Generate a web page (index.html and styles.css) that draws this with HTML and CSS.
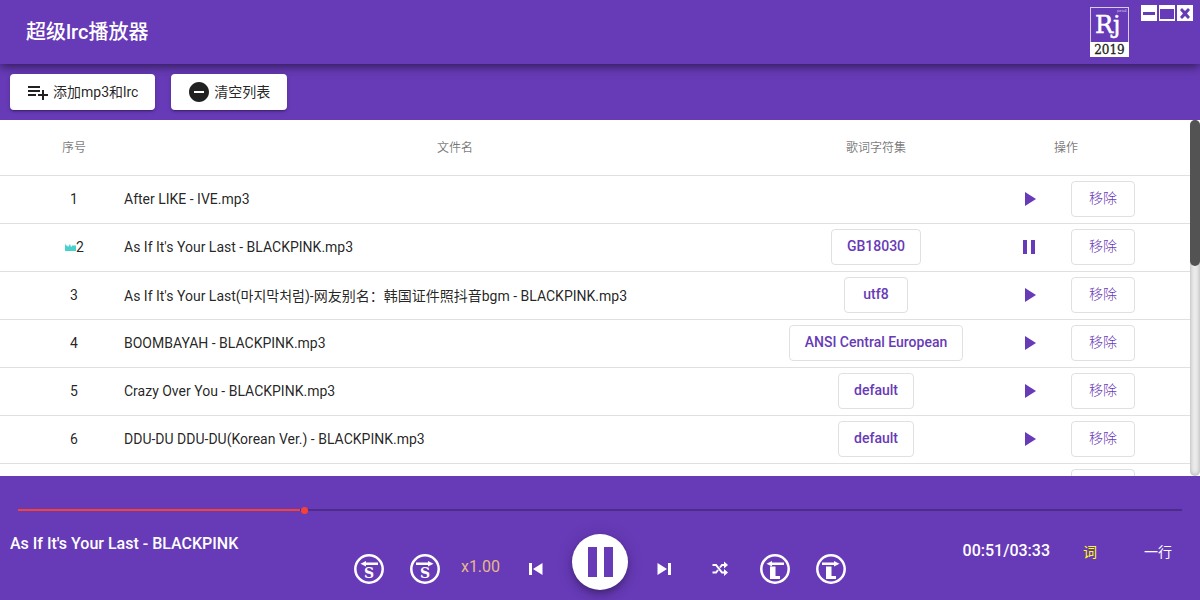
FILE: index.html
```html
<!DOCTYPE html>
<html lang="zh-CN">
<head>
<meta charset="utf-8">
<title>超级lrc播放器</title>
<link rel="stylesheet" href="styles.css">
</head>
<body>
<svg class="defs" aria-hidden="true">
  <symbol id="play" viewBox="0 0 24 24"><path d="M8 5v14l11-7z"/></symbol>
  <symbol id="pause" viewBox="0 0 24 24"><path d="M6 19h4V5H6v14zm8-14v14h4V5h-4z"/></symbol>
  <symbol id="arrow-left" viewBox="0 0 30 30"><path d="M6.500 9.700l5.500-2.700v1.500h12v2.400H12v1.500z"/></symbol>
  <symbol id="arrow-right" viewBox="0 0 30 30"><path d="M23.500 9.700L18 7v1.500H6v2.400h12v1.500z"/></symbol>
</svg>
<div class="app">
  <header class="header">
    <h1 class="title">超级lrc播放器</h1>
    <svg class="logo" viewBox="0 0 39 50" role="img" aria-label="Rj prod 2019">
      <rect class="logo-frame" x="0.5" y="0.5" width="38" height="49"/>
      <rect class="logo-base" x="0" y="35" width="39" height="15"/>
      <text class="logo-rj" x="5" y="26">Rj<tspan class="logo-prod" x="27" y="5">prod</tspan></text>
      <text class="logo-year" x="19.5" y="47" text-anchor="middle">2019</text>
    </svg>
    <div class="window-controls">
      <button class="window-button" aria-label="最小化"><svg viewBox="0 0 16 16"><path d="M2 7h12v3H2z"/></svg></button>
      <button class="window-button" aria-label="最大化"><svg viewBox="0 0 16 16"><path d="M1 4h14v10H1z"/></svg></button>
      <button class="window-button" aria-label="关闭"><svg viewBox="0 0 16 16"><path d="M3 5l2-2 3 3 3-3 2 2-3 3.500 3 3.500-2 2-3-3-3 3-2-2 3-3.500z"/></svg></button>
    </div>
  </header>

  <div class="toolbar">
    <button class="raised-button"><svg class="icon" viewBox="0 0 24 24"><path d="M14 10H2v2h12v-2zm0-4H2v2h12V6zm4 8v-4h-2v4h-4v2h4v4h2v-4h4v-2h-4zM2 16h8v-2H2v2z"/></svg><span>添加mp3和lrc</span></button>
    <button class="raised-button"><svg class="icon" viewBox="0 0 24 24"><path d="M12 2C6.480 2 2 6.480 2 12s4.480 10 10 10 10-4.480 10-10S17.520 2 12 2zm5 11H7v-2h10v2z"/></svg><span>清空列表</span></button>
  </div>

  <main class="playlist">
    <div class="table-scroll">
      <table class="songs">
        <thead>
          <tr><th class="col-index">序号</th><th>文件名</th><th class="col-charset">歌词字符集</th><th class="col-actions">操作</th></tr>
        </thead>
        <tbody>
          <tr><td class="col-index">1</td><td>After LIKE - IVE.mp3</td><td class="col-charset"></td><td class="col-actions"><div class="actions"><button class="play-button" aria-label="播放"><svg class="icon"><use href="#play"/></svg></button><button class="stroked-button">移除</button></div></td></tr>
          <tr><td class="col-index"><svg class="equalizer" viewBox="0 0 12 10"><path d="M1 1l1 3 1-1 1 2 2-3 1 3 2-2 1 1 1-1 1 1v5H1z"/></svg>2</td><td>As If It's Your Last - BLACKPINK.mp3</td><td class="col-charset"><button class="stroked-button">GB18030</button></td><td class="col-actions"><div class="actions"><button class="play-button" aria-label="暂停"><svg class="icon"><use href="#pause"/></svg></button><button class="stroked-button">移除</button></div></td></tr>
          <tr><td class="col-index">3</td><td>As If It's Your Last(마지막처럼)-网友别名：韩国证件照抖音bgm - BLACKPINK.mp3</td><td class="col-charset"><button class="stroked-button">utf8</button></td><td class="col-actions"><div class="actions"><button class="play-button" aria-label="播放"><svg class="icon"><use href="#play"/></svg></button><button class="stroked-button">移除</button></div></td></tr>
          <tr><td class="col-index">4</td><td>BOOMBAYAH - BLACKPINK.mp3</td><td class="col-charset"><button class="stroked-button">ANSI Central European</button></td><td class="col-actions"><div class="actions"><button class="play-button" aria-label="播放"><svg class="icon"><use href="#play"/></svg></button><button class="stroked-button">移除</button></div></td></tr>
          <tr><td class="col-index">5</td><td>Crazy Over You - BLACKPINK.mp3</td><td class="col-charset"><button class="stroked-button">default</button></td><td class="col-actions"><div class="actions"><button class="play-button" aria-label="播放"><svg class="icon"><use href="#play"/></svg></button><button class="stroked-button">移除</button></div></td></tr>
          <tr><td class="col-index">6</td><td>DDU-DU DDU-DU(Korean Ver.) - BLACKPINK.mp3</td><td class="col-charset"><button class="stroked-button">default</button></td><td class="col-actions"><div class="actions"><button class="play-button" aria-label="播放"><svg class="icon"><use href="#play"/></svg></button><button class="stroked-button">移除</button></div></td></tr>
          <tr><td class="col-index"></td><td></td><td class="col-charset"></td><td class="col-actions"><div class="actions"><button class="play-button" aria-label="播放"><svg class="icon"><use href="#play"/></svg></button><button class="stroked-button" aria-label="移除"></button></div></td></tr>
        </tbody>
      </table>
    </div>
    <div class="scroll-track"><div class="scroll-thumb"></div></div>
  </main>

  <footer class="player">
    <input class="progress" type="range" min="0" max="213" step="0.1" value="52.100" aria-label="播放进度">
    <div class="player-row">
      <div class="now-playing">As If It's Your Last - BLACKPINK</div>
      <div class="controls">
        <button class="control" aria-label="减速"><svg class="round-icon" viewBox="0 0 30 30"><circle cx="15" cy="15" r="13.700"/><use href="#arrow-left"/><text x="15" y="24" text-anchor="middle">S</text></svg></button>
        <button class="control" aria-label="加速"><svg class="round-icon" viewBox="0 0 30 30"><circle cx="15" cy="15" r="13.700"/><use href="#arrow-right"/><text x="15" y="24" text-anchor="middle">S</text></svg></button>
        <button class="control speed">x1.00</button>
        <button class="control" aria-label="上一首"><svg class="icon" viewBox="0 0 24 24"><path d="M5 6h3v12H5zM9 12l9.500 6V6z"/></svg></button>
        <button class="main-control" aria-label="暂停"><svg class="main-icon" viewBox="0 0 32 32"><path d="M4 1h9v30H4zM20 1h9v30h-9z"/></svg></button>
        <button class="control" aria-label="下一首"><svg class="icon" viewBox="0 0 24 24"><path d="M16 6h3v12h-3zM15 12l-9.500 6V6z"/></svg></button>
        <button class="control shuffle" aria-label="随机播放"><svg class="icon" viewBox="0 0 24 24"><path class="line" d="M4.500 8H8l6 7.500h3M4.500 15.500H8l2-2.500M12 10.500L14 8h3"/><path d="M16 4.500l4 3.500-4 3.500zM16 12l4 3.500-4 3.500z"/></svg></button>
        <button class="control" aria-label="歌词提前"><svg class="round-icon" viewBox="0 0 30 30"><circle cx="15" cy="15" r="13.700"/><use href="#arrow-left"/><path d="M10 12.500h5.500V22h4.500v3H10z"/></svg></button>
        <button class="control" aria-label="歌词延后"><svg class="round-icon" viewBox="0 0 30 30"><circle cx="15" cy="15" r="13.700"/><use href="#arrow-right"/><path d="M10 12.500h5.500V22h4.500v3H10z"/></svg></button>
      </div>
      <div class="status">
        <span class="time">00:51/03:33</span>
        <button class="text-button lyric">词</button>
        <button class="text-button">一行</button>
      </div>
    </div>
  </footer>
</div>
</body>
</html>
```
FILE: styles.css
```css
* { box-sizing: border-box; }
body {
  margin: 0;
  font-family: Roboto, "Noto Sans CJK SC", "Noto Sans CJK KR", sans-serif;
  font-size: 14px;
  color: rgba(0, 0, 0, 0.87);
}
button {
  margin: 0;
  padding: 0;
  border: 0;
  background: none;
  font: inherit;
  color: inherit;
  cursor: pointer;
}
svg { display: block; fill: currentColor; }
.defs { display: none; }
.icon { width: 24px; height: 24px; }
.app {
  display: flex;
  flex-direction: column;
  height: 100vh;
  background: #673ab7;
}

.header {
  display: flex;
  align-items: flex-start;
  height: 64px;
  padding: 5px 7px 0 26px;
  color: #fff;
  box-shadow: 0 2px 10px rgba(0, 0, 0, 0.6);
}
.title {
  flex: 1;
  margin: 0;
  font-size: 20px;
  font-weight: 500;
  line-height: 54px;
}
.logo { width: 39px; height: 50px; margin: 2px 12px 0 0; }
.logo-frame { fill: none; stroke: #d8cdec; }
.logo-base { fill: #fff; }
.logo-rj { font-family: "DejaVu Serif", serif; font-size: 24px; stroke: #fff; stroke-width: 0.5px; }
.logo-prod { font-size: 4px; fill: #d8cdec; stroke: none; }
.logo-year { font-family: "DejaVu Serif", serif; font-size: 12px; fill: #222; stroke: #222; stroke-width: 0.3px; }
.window-controls { display: flex; gap: 2px; }
.window-button { width: 16px; height: 16px; background: #fff; color: #673ab7; }

.toolbar {
  display: flex;
  align-items: center;
  gap: 16px;
  height: 56px;
  padding: 0 10px;
}
.raised-button {
  display: flex;
  align-items: center;
  gap: 3px;
  height: 36px;
  padding: 0 17px 0 16px;
  border-radius: 4px;
  background: #fff;
  box-shadow: 0 3px 1px -2px rgba(0, 0, 0, 0.2), 0 2px 2px rgba(0, 0, 0, 0.14), 0 1px 5px rgba(0, 0, 0, 0.12);
}
.raised-button span { padding-bottom: 3px; }

.playlist { flex: 1; display: flex; min-height: 0; background: #fff; }
.table-scroll { flex: 1; overflow-y: auto; scrollbar-width: none; }
.songs { width: 100%; border-collapse: separate; border-spacing: 0; table-layout: fixed; }
.songs th {
  height: 56px;
  padding: 0 0 2px;
  border-bottom: 1px solid #e0e0e0;
  font-size: 12px;
  font-weight: 400;
  color: rgba(0, 0, 0, 0.54);
}
.songs td { height: 48px; padding: 0 0 2px; border-bottom: 1px solid #e0e0e0; }
.songs .col-index { width: 124px; padding-left: 24px; text-align: center; }
.songs .col-charset { width: 180px; text-align: center; }
.songs .col-actions { width: 224px; padding-right: 24px; text-align: center; }
.equalizer { display: inline-block; width: 12px; height: 10px; color: #48d1cc; }
.actions { display: flex; justify-content: center; gap: 10px; }
.play-button {
  display: flex;
  align-items: center;
  justify-content: center;
  width: 64px;
  height: 36px;
  color: #673ab7;
}
.stroked-button {
  min-width: 64px;
  height: 36px;
  padding: 0 15px 2px;
  border: 1px solid #e0e0e0;
  border-radius: 4px;
  font-weight: 500;
  color: #673ab7;
  vertical-align: middle;
}
.actions .stroked-button { padding-bottom: 4px; font-weight: 300; }
.scroll-track {
  width: 10px;
  border-radius: 10px;
  background: #ededed;
  box-shadow: inset 0 0 5px rgba(0, 0, 0, 0.3);
}
.scroll-thumb { height: 41%; border-radius: 10px; background: #535353; }

.player { padding: 10px; color: #fff; }
.progress {
  display: block;
  width: calc(100% - 16px);
  height: 48px;
  margin: 0 8px;
  appearance: none;
  background: none;
}
.progress::-webkit-slider-runnable-track {
  height: 2px;
  background: linear-gradient(to right, #f44336 24.200%, #4f2c8c 24.200%);
}
.progress::-webkit-slider-thumb {
  appearance: none;
  width: 7px;
  height: 7px;
  margin-top: -2px;
  border-radius: 50%;
  background: #f44336;
}
.player-row { display: grid; grid-template-columns: 1fr auto 1fr; align-items: start; }
.now-playing { font-size: 16px; font-weight: 500; }
.controls { display: flex; align-items: flex-end; gap: 16px; }
.control {
  display: flex;
  align-items: center;
  justify-content: center;
  width: 40px;
  height: 42px;
}
.speed { width: 39px; height: 48px; font-size: 16px; color: #e6b88a; }
.main-control {
  display: flex;
  align-items: center;
  justify-content: center;
  width: 56px;
  height: 56px;
  border-radius: 50%;
  background: #fff;
  color: #673ab7;
  box-shadow: 0 3px 5px -1px rgba(0, 0, 0, 0.2), 0 6px 10px rgba(0, 0, 0, 0.14), 0 1px 18px rgba(0, 0, 0, 0.12);
}
.main-icon { width: 32px; height: 32px; }
.round-icon { width: 30px; height: 30px; }
.round-icon circle { fill: none; stroke: currentColor; stroke-width: 2.500px; }
.round-icon text { font-family: "DejaVu Serif", serif; font-size: 14px; font-weight: 700; }
.shuffle { width: 39px; }
.shuffle .line { fill: none; stroke: currentColor; stroke-width: 2px; }
.status { display: flex; align-items: center; justify-content: flex-end; gap: 4px; }
.time { margin-right: 4px; padding-bottom: 3px; font-size: 16px; font-weight: 500; }
.text-button { width: 64px; height: 36px; padding-bottom: 3px; }
.lyric { color: #ff0; }
```
